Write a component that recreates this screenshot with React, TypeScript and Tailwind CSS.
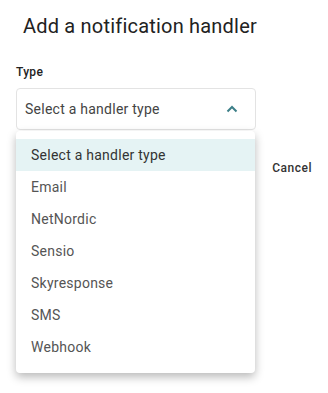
const options = ["Select a handler type", "Email", "NetNordic", "Sensio", "Skyresponse", "SMS", "Webhook"]

export default function App() {
  return (
    <div className="relative w-[328px] h-[393px] bg-white font-['Roboto',sans-serif] overflow-hidden">
      <div className="px-4 pt-[12px]">
        <h2 className="pl-[7px] text-[20px] leading-[28px] tracking-[0.2px] text-[#222222]">Add a notification handler</h2>
        <label className="block mt-[24px] text-[12px] leading-[16px] font-medium tracking-[0.3px] text-[#222222]">Type</label>
        <div className="mt-[8px] w-[240px] h-[42px] rounded border border-[#e3e3e3] flex items-center justify-between pl-[8px] pr-[17px]">
          <span className="text-[14px] tracking-[0.25px] text-[#444444]">Select a handler type</span>
          <svg width="12" height="8" viewBox="0 0 12 8" fill="none">
            <path d="M1.5 6.5 L6 2 L10.5 6.5" stroke="#3d7f88" strokeWidth="2" />
          </svg>
        </div>
        <div className="mt-[20px] flex justify-end">
          <button className="h-9 px-0 text-[12px] font-medium tracking-[0.5px] text-[#333333]">Cancel</button>
        </div>
      </div>
      {/* open dropdown menu */}
      <ul className="absolute left-4 top-[131px] w-[239px] py-2 pb-[10px] bg-white rounded shadow-[0_4px_10px_rgba(0,0,0,0.28)]">
        {options.map((o, i) => (
          <li
            key={o}
            className={
              i === 0
                ? "h-8 flex items-center px-[15px] text-[14px] tracking-[0.25px] bg-[#e5f3f4] text-[#333333]"
                : "h-8 flex items-center px-[15px] text-[14px] tracking-[0.25px] text-[#555555]"
            }
          >
            {o}
          </li>
        ))}
      </ul>
    </div>
  )
}
